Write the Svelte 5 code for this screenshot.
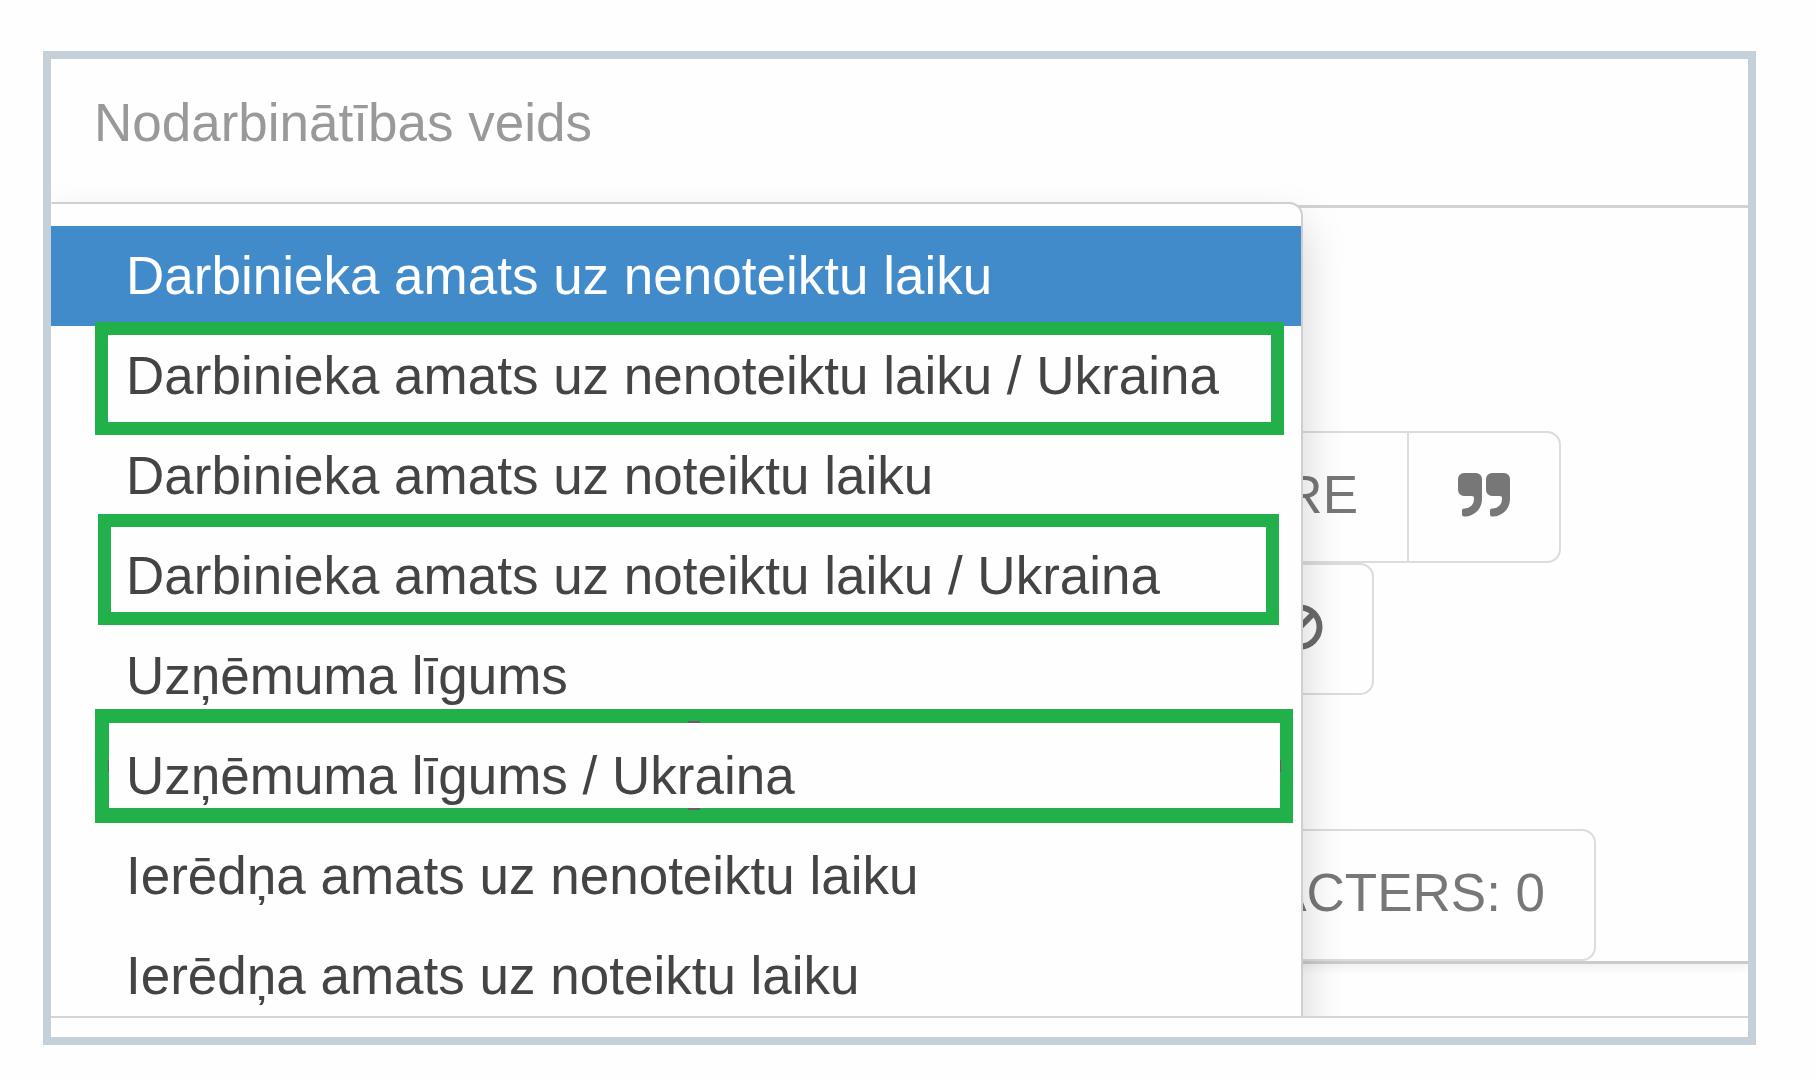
<script>
  const options = [
    { text: 'Darbinieka amats uz nenoteiktu laiku', selected: true },
    { text: 'Darbinieka amats uz nenoteiktu laiku / Ukraina', mark: 'first' },
    { text: 'Darbinieka amats uz noteiktu laiku' },
    { text: 'Darbinieka amats uz noteiktu laiku / Ukraina', mark: 'second' },
    { text: 'Uzņēmuma līgums' },
    { text: 'Uzņēmuma līgums / Ukraina', mark: 'third' },
    { text: 'Ierēdņa amats uz nenoteiktu laiku' },
    { text: 'Ierēdņa amats uz noteiktu laiku' }
  ];
  let current = $state(options.findIndex((option) => option.selected));
</script>

<main class="frame">
  <div class="screen">
    <div class="field" id="kind-label">Nodarbinātības veids</div>

    <div class="editor">
      <div class="group wide">
        <button type="button">PRE</button>
        <button type="button" aria-label="Quote">
          <svg width="52" height="44" viewBox="0 0 52 44" fill="#777">
            <path d="M6 0H18a6 6 0 0 1 6 6V26A17.5 17.5 0 0 1 7 43.500H6a2 2 0 0 1-2-2V37.500a2 2 0 0 1 2-2H7A9 9 0 0 0 16 26.500V25a2 2 0 0 0-2-2H6a6 6 0 0 1-6-6V6a6 6 0 0 1 6-6z" />
            <path transform="translate(28 0)" d="M6 0H18a6 6 0 0 1 6 6V26A17.5 17.5 0 0 1 7 43.500H6a2 2 0 0 1-2-2V37.500a2 2 0 0 1 2-2H7A9 9 0 0 0 16 26.500V25a2 2 0 0 0-2-2H6a6 6 0 0 1-6-6V6a6 6 0 0 1 6-6z" />
          </svg>
        </button>
      </div>
      <div class="group narrow">
        <button type="button" aria-label="Clear formatting">
          <svg width="46" height="46" viewBox="0 0 46 46" fill="none" stroke="#6b6b6b" stroke-width="6">
            <circle cx="23" cy="23" r="19.500" />
            <path d="M9 37 37 9" />
          </svg>
        </button>
      </div>
      <div class="group count">
        <button type="button">CHARACTERS: 0</button>
      </div>
    </div>
    <div class="after"></div>

    <ul class="menu" role="listbox" aria-labelledby="kind-label">
      {#each options as option, i}
        <li role="presentation">
          <button
            type="button"
            role="option"
            aria-selected={current === i}
            class:active={current === i}
            onclick={() => (current = i)}>{option.text}</button>
          {#if option.mark}<span class="mark {option.mark}"></span>{/if}
        </li>
      {/each}
    </ul>
  </div>
</main>

<style>
  :global(body) {
    margin: 0;
    background: #fefefe;
  }
  .frame {
    box-sizing: border-box;
    margin: 51px 62px 35px 43px;
    padding-bottom: 19px;
    border: 8px solid #c6d0d9;
    background: #fefefe;
    font-family: 'Liberation Sans', Arial, sans-serif;
    font-size: 53px;
    line-height: 60px;
  }
  .screen {
    position: relative;
    overflow: hidden;
    border-bottom: 2px solid #d6d6d6;
  }
  .field {
    padding: 34px 43px 52px;
    border-bottom: 3px solid #d4d4d4;
    color: #999;
  }
  .editor {
    display: flex;
    flex-direction: column;
    align-items: flex-start;
    padding-top: 223px;
    border-bottom: 3px solid #cbcbcb;
    box-shadow: 0 4px 8px rgba(0, 0, 0, 0.06);
  }
  .group {
    display: flex;
    box-sizing: border-box;
    height: 132px;
    border: 2px solid #dcdcdc;
    border-radius: 14px;
  }
  .group button {
    display: flex;
    align-items: center;
    padding: 0 49px 5px;
    border: 0;
    background: none;
    color: #777;
    font: inherit;
    white-space: nowrap;
  }
  .group button + button {
    border-left: 2px solid #dcdcdc;
  }
  .wide {
    margin-left: 1147px;
  }
  .narrow {
    margin-left: 1175px;
  }
  .count {
    margin-top: 134px;
    margin-left: 1019px;
  }
  .after {
    height: 52px;
  }
  .menu {
    position: absolute;
    top: 143px;
    left: 0;
    margin: 0;
    padding: 22px 0;
    border: 2px solid #cfcfcf;
    border-left: 0;
    border-radius: 2px 14px 14px 0;
    background: #fefefe;
    box-shadow: 0 22px 44px rgba(0, 0, 0, 0.175);
    list-style: none;
  }
  .menu li {
    position: relative;
  }
  .menu button {
    display: block;
    width: 100%;
    height: 100px;
    padding: 0 82px 1px 75px;
    border: 0;
    background: none;
    color: #444;
    font: inherit;
    text-align: left;
    white-space: nowrap;
  }
  .menu .active {
    background: #428bca;
    color: #fff;
  }
  /* Green frames laid over the newly added options */
  .mark {
    position: absolute;
    z-index: 1;
    box-sizing: border-box;
    border: 13px solid #22b04b;
    pointer-events: none;
  }
  .first {
    inset: -4px 17px -9px 44px;
  }
  .second {
    inset: -12px 22px 1px 47px;
  }
  .third {
    inset: -17px 8px 3px 44px;
    border-width: 14px 13px 15px 14px;
  }
  .third::before,
  .third::after {
    content: '';
    position: absolute;
    box-sizing: border-box;
    border: 0 solid #6f5a6c;
  }
  .third::before {
    top: -2px;
    bottom: -2px;
    left: calc(50% - 6px);
    width: 12px;
    border-width: 2px 0;
  }
  .third::after {
    top: calc(50% - 6px);
    right: -1px;
    left: -1px;
    height: 12px;
    border-width: 0 1px;
  }
</style>
